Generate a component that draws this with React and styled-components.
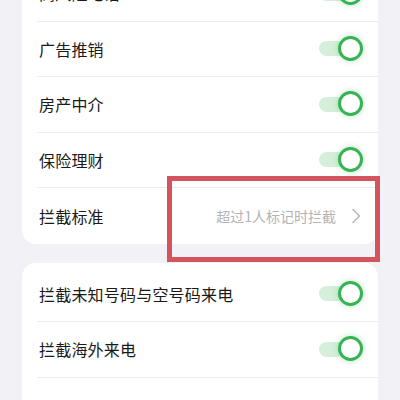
import React from "react";
import styled, { createGlobalStyle } from "styled-components";

const Global = createGlobalStyle`
  html, body { margin: 0; padding: 0; background: #f2f2f6; }
  body { font-family: "Noto Sans CJK SC", "Noto Sans", sans-serif; overflow: hidden; }
`;

const Page = styled.div`
  position: relative;
  width: 400px;
  height: 400px;
  overflow: hidden;
  background: #f2f2f6;
`;

const List = styled.div`
  display: flex;
  flex-direction: column;
  gap: 19px;
  padding: 0 22px;
  margin-top: -34px;
`;

const Card = styled.div`
  background: #ffffff;
  border-radius: 14px;
  padding-top: ${(p) => p.$padTop || 0}px;
  display: flex;
  flex-direction: column;
`;

const Row = styled.div`
  display: flex;
  align-items: center;
  height: 55.5px;
  box-sizing: border-box;
  margin-left: 15px;
  padding-right: 15px;
  border-bottom: ${(p) => (p.$last ? "none" : "1px solid #ededef")};
`;

const Label = styled.span`
  flex: 1;
  padding-left: 2px;
  font-size: 16px;
  color: #1a1a1a;
  letter-spacing: 0.2px;
  white-space: nowrap;
`;

const Value = styled.span`
  font-size: 14px;
  color: #b4b4b4;
  margin-right: 15px;
  white-space: nowrap;
`;

const Switch = styled.div`
  position: relative;
  width: 44px;
  height: 26px;
  display: flex;
  align-items: center;
`;

const Track = styled.div`
  width: 38px;
  height: 15px;
  border-radius: 8px;
  background: #d5efda;
`;

const Knob = styled.div`
  position: absolute;
  right: 0;
  top: 0;
  width: 25px;
  height: 25px;
  box-sizing: border-box;
  border-radius: 50%;
  border: 3.5px solid #37b254;
  background: #ffffff;
  box-shadow: 0 0 6px rgba(55, 178, 84, 0.35);
`;

const Chevron = () => (
  <svg width="10" height="16" viewBox="0 0 10 16" style={{ marginRight: 2 }}>
    <path d="M2 1.5 L8.5 8 L2 14.5" fill="none" stroke="#b4b4b4" strokeWidth="1.4" strokeLinecap="round" strokeLinejoin="round" />
  </svg>
);

const Highlight = styled.div`
  position: absolute;
  left: 167px;
  top: 176px;
  width: 213px;
  height: 86px;
  box-sizing: border-box;
  border: 5px solid #d3545c;
  pointer-events: none;
`;

const Toggle = () => (
  <Switch>
    <Track />
    <Knob />
  </Switch>
);

const first = ["高风险电话", "广告推销", "房产中介", "保险理财"];
const second = ["拦截未知号码与空号码来电", "拦截海外来电", ""];

export default function App() {
  return (
    <Page>
      <Global />
      <List>
        <Card>
          {first.map((t) => (
            <Row key={t}>
              <Label>{t}</Label>
              <Toggle />
            </Row>
          ))}
          <Row $last>
            <Label>拦截标准</Label>
            <Value>超过1人标记时拦截</Value>
            <Chevron />
          </Row>
        </Card>
        <Card $padTop={4}>
          {second.map((t, i) =>
            t ? (
              <Row key={i}>
                <Label>{t}</Label>
                <Toggle />
              </Row>
            ) : (
              <Row key={i} $last>
                <Label />
              </Row>
            )
          )}
        </Card>
      </List>
      <Highlight />
    </Page>
  );
}
